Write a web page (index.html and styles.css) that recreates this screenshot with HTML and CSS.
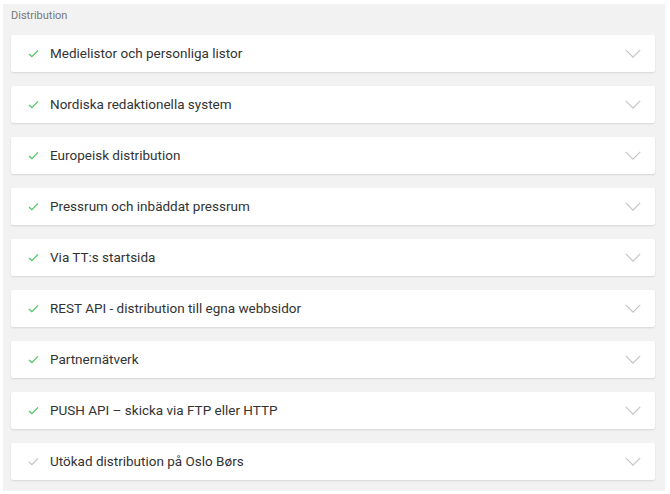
FILE: index.html
```html
<!DOCTYPE html>
<html>
<head>
<meta charset="utf-8">
<link rel="stylesheet" href="styles.css">
</head>
<body>
<section class="panel">
  <div class="title">Distribution</div>
  <div class="list">
    <div class="card"><svg class="check on" viewBox="0 0 12 10"><path d="M1 5.5l3.2 3L11 1.5"/></svg><span class="label">Medielistor och personliga listor</span><svg class="chev" viewBox="0 0 18 10"><path d="M1 1l8 8 8-8"/></svg></div>
    <div class="card"><svg class="check on" viewBox="0 0 12 10"><path d="M1 5.5l3.2 3L11 1.5"/></svg><span class="label">Nordiska redaktionella system</span><svg class="chev" viewBox="0 0 18 10"><path d="M1 1l8 8 8-8"/></svg></div>
    <div class="card"><svg class="check on" viewBox="0 0 12 10"><path d="M1 5.5l3.2 3L11 1.5"/></svg><span class="label">Europeisk distribution</span><svg class="chev" viewBox="0 0 18 10"><path d="M1 1l8 8 8-8"/></svg></div>
    <div class="card"><svg class="check on" viewBox="0 0 12 10"><path d="M1 5.5l3.2 3L11 1.5"/></svg><span class="label">Pressrum och inbäddat pressrum</span><svg class="chev" viewBox="0 0 18 10"><path d="M1 1l8 8 8-8"/></svg></div>
    <div class="card"><svg class="check on" viewBox="0 0 12 10"><path d="M1 5.5l3.2 3L11 1.5"/></svg><span class="label">Via TT:s startsida</span><svg class="chev" viewBox="0 0 18 10"><path d="M1 1l8 8 8-8"/></svg></div>
    <div class="card"><svg class="check on" viewBox="0 0 12 10"><path d="M1 5.5l3.2 3L11 1.5"/></svg><span class="label">REST API - distribution till egna webbsidor</span><svg class="chev" viewBox="0 0 18 10"><path d="M1 1l8 8 8-8"/></svg></div>
    <div class="card"><svg class="check on" viewBox="0 0 12 10"><path d="M1 5.5l3.2 3L11 1.5"/></svg><span class="label">Partnernätverk</span><svg class="chev" viewBox="0 0 18 10"><path d="M1 1l8 8 8-8"/></svg></div>
    <div class="card"><svg class="check on" viewBox="0 0 12 10"><path d="M1 5.5l3.2 3L11 1.5"/></svg><span class="label">PUSH API – skicka via FTP eller HTTP</span><svg class="chev" viewBox="0 0 18 10"><path d="M1 1l8 8 8-8"/></svg></div>
    <div class="card"><svg class="check off" viewBox="0 0 12 10"><path d="M1 5.5l3.2 3L11 1.5"/></svg><span class="label">Utökad distribution på Oslo Børs</span><svg class="chev" viewBox="0 0 18 10"><path d="M1 1l8 8 8-8"/></svg></div>
  </div>
</section>
</body>
</html>
```
FILE: styles.css
```css
html, body {
  margin: 0;
  padding: 0;
  background: #ffffff;
  font-family: Roboto, "Liberation Sans", sans-serif;
}
.panel {
  margin: 4px 5px 0 3px;
  background: #f2f2f2;
  padding: 2px 10px 11px 8px;
}
.title {
  font-size: 11px;
  line-height: 20px;
  color: #777;
  margin-bottom: 9px;
}
.list {
  display: flex;
  flex-direction: column;
  gap: 14px;
}
.card {
  box-sizing: border-box;
  height: 37px;
  background: #fff;
  border-radius: 2px;
  box-shadow: 0 1px 2px rgba(0,0,0,0.12);
  display: flex;
  align-items: center;
  padding: 0 13px 1px 17px;
}
.check {
  width: 11px;
  height: 9px;
  fill: none;
  stroke-width: 1.4;
  margin-right: 11px;
}
.check.on { stroke: #4cc95e; }
.check.off { stroke: #c4c4c4; }
.label {
  flex: 1;
  font-size: 13.5px;
  color: #333;
}
.chev {
  width: 18px;
  height: 9px;
  fill: none;
  stroke: #c4c4c4;
  stroke-width: 1.3;
}
```
